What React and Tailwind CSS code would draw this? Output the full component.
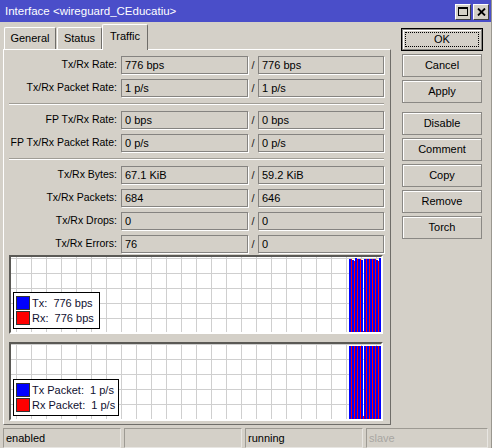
import React from 'react';

const font = "font-['Liberation_Sans',Arial,sans-serif]";

const rows1 = [
  ['Tx/Rx Rate:', '776 bps', '776 bps'],
  ['Tx/Rx Packet Rate:', '1 p/s', '1 p/s'],
];
const rows2 = [
  ['FP Tx/Rx Rate:', '0 bps', '0 bps'],
  ['FP Tx/Rx Packet Rate:', '0 p/s', '0 p/s'],
];
const rows3 = [
  ['Tx/Rx Bytes:', '67.1 KiB', '59.2 KiB'],
  ['Tx/Rx Packets:', '684', '646'],
  ['Tx/Rx Drops:', '0', '0'],
  ['Tx/Rx Errors:', '76', '0'],
];

// bar tops in px from graph top (tx, rx)
const bars1 = [[2, 2], [3, 4], [1, 2], [2, 2], [3, 74], [2, 2], [2, 2], [2, 2], [2, 2], [3, 4], [1, 1]];
const bars2 = [[2, 2], [2, 2], [2, 2], [2, 2], [2, 72], [2, 2], [2, 2], [2, 2], [2, 2], [2, 2], [2, 2]];

function Field({ value }) {
  return (
    <div className="h-[18px] w-full border border-[#858380] shadow-[1px_1px_0_#fff] pl-[3px] leading-[16px] text-[11px] text-black whitespace-nowrap">
      {value}
    </div>
  );
}

function Row({ label, a, b }) {
  return (
    <div className="flex items-center h-[18px]">
      <div className="w-[112px] pr-[4px] text-right text-[10.5px] text-black whitespace-nowrap">{label}</div>
      <div className="w-[127px]"><Field value={a} /></div>
      <div className="w-[10px] text-center text-[11px] text-[#222]">/</div>
      <div className="w-[126px]"><Field value={b} /></div>
    </div>
  );
}

function Sep() {
  return <div className="h-[2px] my-[6px] mr-[6px] border-t border-[#a09d96] border-b border-b-white" />;
}

function Button({ children, focus }) {
  if (focus) {
    return (
      <div className="h-[23px] w-[82px] -ml-px border border-black bg-[#d4d0c8]">
        <div className="h-full border border-[#8a8884] shadow-[inset_1px_1px_0_#fff] flex items-center justify-center p-[2px]">
          <div className="h-full w-full border border-dotted border-black flex items-center justify-center text-[11px] text-black">{children}</div>
        </div>
      </div>
    );
  }
  return (
    <div className="h-[23px] w-[80px] border border-[#8a8884] shadow-[inset_1px_1px_0_#fff] bg-[#d4d0c8] flex items-center justify-center text-[11px] text-black">
      {children}
    </div>
  );
}

function Bars({ data, h }) {
  return (
    <svg className="absolute right-0 top-0" width="32" height={h} viewBox={`0 0 32 ${h}`}>
      {data.map(([t, r], i) => (
        <g key={i}>
          <rect x={i * 3} y={t} width="2" height={h - t} fill="#0000ff" />
          <rect x={i * 3 + 2} y={r} width="1" height={h - r} fill="#ff0000" />
        </g>
      ))}
    </svg>
  );
}

function Graph({ bars, legend, offY, w }) {
  return (
    <div className="h-[79px] w-[374px] border-t-2 border-l-2 border-t-[#5a5955] border-l-[#5a5955] border-b-2 border-r-2 border-b-white border-r-white">
      <div
        className={`relative h-full w-full bg-white bg-[linear-gradient(to_right,#cfcfcf_1px,transparent_1px),linear-gradient(to_bottom,#cfcfcf_1px,transparent_1px)] bg-[size:15px_15px] ${offY}`}
      >
        <Bars data={bars} h={75} />
        <div className={`absolute left-[2px] bottom-[3px] border border-black bg-white px-[2px] py-[3px] flex flex-col gap-[1px] ${w}`}>
          {legend.map(([c, t]) => (
            <div key={t} className="flex items-center h-[14px] gap-[2px]">
              <div className={`w-[14px] h-[14px] border border-[#333] ${c}`} />
              <div className="text-[11px] text-[#101030] whitespace-pre leading-none">{t}</div>
            </div>
          ))}
        </div>
      </div>
    </div>
  );
}

function StatusCell({ children, className, w }) {
  return (
    <div className={`h-[20px] border border-[#9d9a93] border-b-[#e8e6e2] border-r-[#e8e6e2] pl-[2px] leading-[18px] text-[11px] ${w} ${className}`}>
      {children}
    </div>
  );
}

export default function App() {
  return (
    <div className={`w-[492px] h-[448px] bg-[#d4d0c8] flex flex-col overflow-hidden ${font} border-r border-[#9a978f]`}>
      {/* Title bar */}
      <div className="h-[22px] bg-[#4a4ec9] flex items-center pl-[5px] pr-[2px]">
        <div className="flex-1 text-white text-[11.5px] pt-[1px]">Interface &lt;wireguard_CEducatiu&gt;</div>
        <div className="flex gap-[2px] mt-[1px]">
          <div className="w-[16px] h-[16px] bg-[#d4d0c8] border border-[#404040] border-t-white border-l-white flex items-center justify-center">
            <div className="w-[10px] h-[9px] border border-black border-t-2" />
          </div>
          <div className="w-[16px] h-[16px] bg-[#d4d0c8] border border-[#404040] border-t-white border-l-white flex items-center justify-center">
            <svg width="9" height="8" viewBox="0 0 9 8">
              <path d="M1 0.5 L8 7.5 M8 0.5 L1 7.5" stroke="#000" strokeWidth="1.8" />
            </svg>
          </div>
        </div>
      </div>

      <div className="flex flex-1">
        {/* Left: tabs + panel */}
        <div className="ml-[3px] w-[388px] flex flex-col">
          <div className="h-[27px] pt-[2px] flex items-end pl-[1px]">
            <div className="h-[22px] w-[52px] border-t border-l border-white border-r border-r-[#6f6d69] rounded-t-[2px] flex items-center justify-center text-[11px] text-black">General</div>
            <div className="h-[22px] w-[45px] ml-[1px] border-t border-l border-white border-r border-r-[#6f6d69] rounded-t-[2px] flex items-center justify-center text-[11px] text-black">Status</div>
            <div className="relative z-10 h-[26px] -mb-px w-[46px] bg-[#d4d0c8] border-t border-l border-white border-r border-r-[#6f6d69] rounded-t-[2px] flex items-center justify-center pb-[3px] text-[11px] text-black">Traffic</div>
          </div>
          <div className="h-[376px] border-t border-l border-white border-r border-b border-r-[#6f6d69] border-b-[#6f6d69] pt-[6px] pl-[5px]">
            <div className="flex flex-col gap-[5px]">
              {rows1.map(([l, a, b]) => <Row key={l} label={l} a={a} b={b} />)}
            </div>
            <Sep />
            <div className="flex flex-col gap-[5px]">
              {rows2.map(([l, a, b]) => <Row key={l} label={l} a={a} b={b} />)}
            </div>
            <Sep />
            <div className="flex flex-col gap-[5px]">
              {rows3.map(([l, a, b]) => <Row key={l} label={l} a={a} b={b} />)}
            </div>
            <div className="flex flex-col gap-[8px] mt-[2px]">
              <Graph
                bars={bars1}
                offY="bg-[position:5px_1px]"
                w="w-[87px]"
                legend={[['bg-[#0000ff]', 'Tx:  776 bps'], ['bg-[#ff0000]', 'Rx:  776 bps']]}
              />
              <Graph
                bars={bars2}
                offY="bg-[position:5px_0px]"
                w="w-[106px]"
                legend={[['bg-[#0000ff]', 'Tx Packet:  1 p/s'], ['bg-[#ff0000]', 'Rx Packet:  1 p/s']]}
              />
            </div>
          </div>
        </div>

        {/* Right: buttons */}
        <div className="ml-[11px] pt-[6px] flex flex-col gap-[3px]">
          <Button focus>OK</Button>
          <Button>Cancel</Button>
          <Button>Apply</Button>
          <div className="h-[3px]" />
          <Button>Disable</Button>
          <Button>Comment</Button>
          <Button>Copy</Button>
          <Button>Remove</Button>
          <Button>Torch</Button>
        </div>
      </div>

      {/* Status bar */}
      <div className="h-[21px] flex gap-[3px] pl-[3px] pt-px">
        <StatusCell w="w-[118px]" className="text-black">enabled</StatusCell>
        <StatusCell w="w-[118px]" className="text-black" />
        <StatusCell w="w-[118px]" className="text-black">running</StatusCell>
        <StatusCell w="w-[122px]" className="text-[#a8a6a2]">slave</StatusCell>
      </div>
    </div>
  );
}
